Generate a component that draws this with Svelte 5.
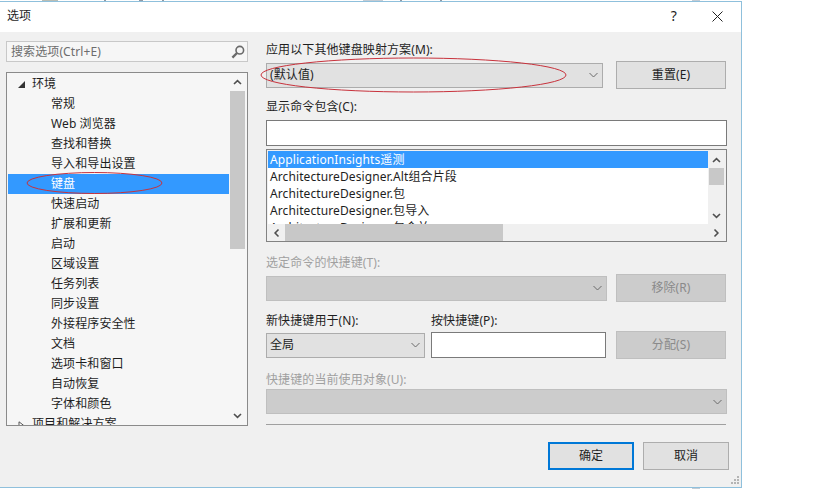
<script>
  const nodes = ['常规', 'Web 浏览器', '查找和替换', '导入和导出设置', '键盘', '快速启动', '扩展和更新', '启动', '区域设置', '任务列表', '同步设置', '外接程序安全性', '文档', '选项卡和窗口', '自动恢复', '字体和颜色']
  const commands = ['ApplicationInsights遥测', 'ArchitectureDesigner.Alt组合片段', 'ArchitectureDesigner.包', 'ArchitectureDesigner.包导入', 'ArchitectureDesigner.包合并']
</script>

{#snippet chevron(dir)}
  <svg class="arrow" width="9" height="6" viewBox="0 0 9 6" style="transform: rotate({dir}deg)">
    <path d="M1 5 4.5 1.6 8 5" fill="none" stroke="#505050" stroke-width="1.6"/>
  </svg>
{/snippet}

{#snippet drop()}
  <svg class="drop" width="9" height="6" viewBox="0 0 9 6">
    <path d="M.5 1 4.5 5 8.5 1" fill="none" stroke="#6a6a6a" stroke-width="1"/>
  </svg>
{/snippet}

<div class="sliver"></div>
<div class="dialog">
  <header class="titlebar">
    <span class="title">选项</span>
    <span class="help">?</span>
    <svg class="close" width="11" height="11" viewBox="0 0 11 11">
      <path d="M.5 .5 10.5 10.5M10.5 .5 .5 10.5" stroke="#222" stroke-width="1" fill="none"/>
    </svg>
  </header>

  <div class="content">
    <div class="left">
      <div class="search">
        <span>搜索选项(Ctrl+E)</span>
        <svg width="14" height="14" viewBox="0 0 14 14">
          <circle cx="8.8" cy="5.2" r="3.8" fill="none" stroke="#6a6a6a" stroke-width="1.6"/>
          <path d="M6 8 1.4 12.6" stroke="#6a6a6a" stroke-width="2.4"/>
        </svg>
      </div>

      <div class="tree">
        <div class="tree-rows">
          <div class="row parent">
            <svg class="twist" width="7" height="7" viewBox="0 0 7 7"><path d="M7 0V7H0Z" fill="#333"/></svg>
            环境
          </div>
          {#each nodes as n}
            <div class="row child" class:selected={n === '键盘'}>{n}</div>
          {/each}
          <div class="row parent">
            <svg class="twist" width="7" height="9" viewBox="0 0 7 9"><path d="M1 .8 5.8 4.5 1 8.2Z" fill="#fff" stroke="#555"/></svg>
            项目和解决方案
          </div>
        </div>
        <div class="vbar tree-bar">
          <div class="btn">{@render chevron(0)}</div>
          <div class="track"><div class="thumb"></div></div>
          <div class="btn">{@render chevron(180)}</div>
        </div>
      </div>
    </div>

    <div class="right">
      <div class="label first">应用以下其他键盘映射方案(M):</div>
      <div class="line">
        <div class="combo scheme"><span>(默认值)</span>{@render drop()}</div>
        <div class="button">重置(E)</div>
      </div>

      <div class="label l2">显示命令包含(C):</div>
      <div class="input filter"></div>

      <div class="list">
        <div class="list-main">
          <div class="items">
            {#each commands as c, i}
              <div class="item" class:selected={i === 0}>{c}</div>
            {/each}
          </div>
          <div class="vbar list-bar">
            <div class="btn">{@render chevron(0)}</div>
            <div class="track"><div class="thumb"></div></div>
            <div class="btn">{@render chevron(180)}</div>
          </div>
        </div>
        <div class="hbar">
          <div class="btn">{@render chevron(-90)}</div>
          <div class="track"><div class="thumb"></div></div>
          <div class="btn">{@render chevron(90)}</div>
        </div>
      </div>

      <div class="label disabled l3">选定命令的快捷键(T):</div>
      <div class="line">
        <div class="combo off current">{@render drop()}</div>
        <div class="button off">移除(R)</div>
      </div>

      <div class="labels l4">
        <div class="label scope-label">新快捷键用于(N):</div>
        <div class="label">按快捷键(P):</div>
      </div>
      <div class="line assign">
        <div class="combo scope"><span>全局</span>{@render drop()}</div>
        <div class="input keys"></div>
        <div class="button off">分配(S)</div>
      </div>

      <div class="label disabled l5">快捷键的当前使用对象(U):</div>
      <div class="combo off used">{@render drop()}</div>
      <div class="rule"></div>

      <div class="actions">
        <div class="action primary">确定</div>
        <div class="action">取消</div>
      </div>
    </div>
  </div>

  <svg class="grip" width="9" height="9" viewBox="0 0 9 9">
    <path d="M7 0h2v2H7zM4 3h2v2H4zM7 3h2v2H7zM1 6h2v2H1zM4 6h2v2H4zM7 6h2v2H7z" fill="#b4b4b4"/>
  </svg>

  <svg class="marks" width="742" height="487" viewBox="0 0 742 487">
    <ellipse cx="94.5" cy="181" rx="67.5" ry="10.5"/>
    <ellipse cx="413.5" cy="73" rx="152.5" ry="17"/>
  </svg>
</div>
<div class="sliver under"></div>

<style>
  :global(body) {
    margin: 0;
    background: #fff;
  }

  /* bits of the window behind the dialog */
  .sliver {
    height: 1px;
    background: linear-gradient(90deg, #fff 0 42px, #b9bdb4 42px 58px, #fff 58px 104px, #8f9aa6 104px 106px, #fff 106px 139px, #8f9aa6 139px 143px, #fff 143px 162px, #8f9aa6 162px 164px, #fff 164px 363px, #c4ccd4 363px 383px, #fff 383px 400px, #8f9aa6 400px 402px, #fff 402px 440px, #8f9aa6 440px 442px, #fff 442px 692px, #c4ccd4 692px 700px, #fff 700px);
  }

  .under {
    background: linear-gradient(90deg, #fff 0 692px, #c4ccd4 692px 700px, #fff 700px);
  }

  .dialog {
    position: relative;
    box-sizing: border-box;
    width: 742px;
    height: 487px;
    border-top: 1px solid #8fc0dc;
    border-right: 1px solid #8fc0dc;
    border-bottom: 1px solid #8fc0dc;
    background: #f0f0f0;
    font: 12px/16px 'Noto Sans', 'Noto Sans CJK SC', sans-serif;
    letter-spacing: 0.1px;
    color: #1e1e1e;
  }

  .titlebar {
    box-sizing: border-box;
    display: flex;
    align-items: center;
    height: 30px;
    padding-bottom: 2px;
    background: #fff;
  }

  .title {
    margin-left: 7px;
  }

  .help {
    margin-left: auto;
    margin-right: 35px;
    font-size: 14px;
  }

  .close {
    margin-right: 18px;
  }

  .content {
    display: flex;
  }

  .left {
    width: 242px;
    margin-left: 6px;
    padding-top: 9px;
  }

  .search {
    box-sizing: border-box;
    display: flex;
    align-items: center;
    justify-content: space-between;
    height: 21px;
    padding: 0 2px 0 4px;
    border: 1px solid #c8c8c8;
    background: #f6f6f6;
    color: #6d6d6d;
  }

  .tree {
    box-sizing: border-box;
    display: flex;
    height: 354px;
    margin-top: 10px;
    border: 1px solid #8a8a8a;
    background: #f6f6f6;
  }

  .tree-rows {
    width: 221px;
    margin: 1px 0 0 1px;
    overflow: hidden;
  }

  .row {
    display: flex;
    align-items: center;
    height: 20px;
    white-space: nowrap;
  }

  .parent {
    padding-left: 24px;
    position: relative;
  }

  .twist {
    position: absolute;
    left: 10px;
    top: 7px;
  }

  .child {
    padding-left: 43px;
  }

  .selected {
    background: #3399ff;
    color: #fff;
  }

  .vbar {
    display: flex;
    flex-direction: column;
  }

  .tree-bar {
    width: 15px;
    margin-left: 1px;
  }

  .btn {
    display: flex;
    align-items: center;
    justify-content: center;
    flex: none;
  }

  .arrow {
    display: block;
  }

  .tree-bar .btn {
    height: 18px;
  }

  .track {
    flex: 1;
    min-width: 0;
    min-height: 0;
  }

  .thumb {
    background: #c8c8c8;
  }

  .tree-bar .thumb {
    height: 158px;
  }

  .tree-bar .track {
    background: #f6f6f6;
  }

  .right {
    width: 463px;
    margin-left: 18px;
    padding-top: 10px;
  }

  .label {
    height: 16px;
  }

  .disabled {
    color: #a0a0a0;
  }

  .line {
    display: flex;
    align-items: center;
    justify-content: space-between;
    height: 28px;
    width: 460px;
  }

  .first + .line {
    margin-top: 3px;
  }

  .combo {
    box-sizing: border-box;
    display: flex;
    align-items: center;
    justify-content: space-between;
    height: 25px;
    padding: 0 4px 0 3px;
    border: 1px solid #acacac;
    background: #e1e1e1;
  }

  .drop {
    flex: none;
    margin-left: auto;
  }

  .scheme {
    width: 337px;
  }

  .button {
    box-sizing: border-box;
    display: flex;
    align-items: center;
    justify-content: center;
    width: 110px;
    height: 28px;
    border: 1px solid #adadad;
    background: #e1e1e1;
  }

  .button.off {
    border-color: #bfbfbf;
    background: #cccccc;
    color: #8a8a8a;
  }

  .combo.off {
    border-color: #bfbfbf;
    background: #cccccc;
  }

  .l2 {
    margin-top: 10px;
  }

  .input {
    box-sizing: border-box;
    border: 1px solid #7a7a7a;
    background: #fff;
  }

  .filter {
    width: 461px;
    height: 26px;
    margin-top: 5px;
  }

  .list {
    box-sizing: border-box;
    width: 461px;
    height: 93px;
    margin-top: 3px;
    padding: 1px;
    border: 1px solid #828282;
    background: #f0f0f0;
  }

  .list-main {
    display: flex;
    height: 73px;
  }

  .items {
    width: 440px;
    overflow: hidden;
    background: #fff;
  }

  .item {
    height: 17px;
    line-height: 18px;
    padding-left: 2px;
    white-space: nowrap;
  }

  .list-bar {
    width: 15px;
    margin-left: 1px;
  }

  .list-bar .btn {
    height: 17px;
  }

  .list-bar .thumb {
    height: 17px;
  }

  .hbar {
    display: flex;
    height: 17px;
  }

  .hbar .btn {
    width: 17px;
  }

  .hbar .track {
    display: flex;
    align-items: stretch;
  }

  .hbar .thumb {
    width: 218px;
  }

  .l3 {
    margin-top: 13px;
  }

  .l3 + .line {
    margin-top: 3px;
  }

  .current {
    width: 341px;
  }

  .labels {
    display: flex;
  }

  .l4 {
    margin-top: 11px;
  }

  .scope-label {
    width: 165px;
  }

  .assign {
    margin-top: 2px;
  }

  .scope {
    width: 159px;
  }

  .keys {
    width: 175px;
    height: 26px;
    margin-left: 6px;
    margin-right: 10px;
  }

  .l5 {
    margin-top: 13px;
  }

  .used {
    width: 461px;
    margin-top: 1px;
  }

  .rule {
    width: 460px;
    height: 1px;
    margin-top: 10px;
    background: #a0a0a0;
  }

  .actions {
    display: flex;
    justify-content: flex-end;
    gap: 9px;
    margin-top: 17px;
  }

  .action {
    box-sizing: border-box;
    display: flex;
    align-items: center;
    justify-content: center;
    width: 86px;
    height: 28px;
    border: 1px solid #adadad;
    background: #e1e1e1;
  }

  .primary {
    border: 2px solid #0078d7;
  }

  .grip {
    position: absolute;
    right: 2px;
    bottom: 2px;
  }

  .marks {
    position: absolute;
    left: 0;
    top: 0;
    pointer-events: none;
  }

  .marks ellipse {
    fill: none;
    stroke: #c8323c;
    stroke-width: 1;
  }
</style>
